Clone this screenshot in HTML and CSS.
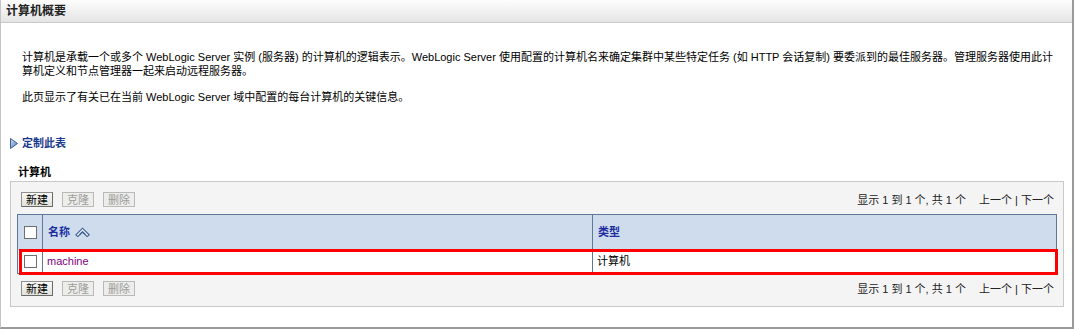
FILE: index.html
```html
<!DOCTYPE html>
<html lang="zh-CN">
<head>
  <meta charset="UTF-8">
  <title>计算机概要</title>
  <link rel="stylesheet" href="styles.css">
</head>
<body>

  <div class="frame">
    <!-- Titelleiste -->
    <div class="frame-title">计算机概要</div>

    <div class="frame-body">
      <p class="intro">计算机是承载一个或多个 WebLogic Server 实例 (服务器) 的计算机的逻辑表示。WebLogic Server 使用配置的计算机名来确定集群中某些特定任务 (如 HTTP 会话复制) 要委派到的最佳服务器。管理服务器使用此计算机定义和节点管理器一起来启动远程服务器。</p>
      <p class="intro">此页显示了有关已在当前 WebLogic Server 域中配置的每台计算机的关键信息。</p>

      <a class="customize" href="#">
        <svg width="8" height="11" viewBox="0 0 8 11">
          <defs>
            <linearGradient id="tri" x1="0" y1="0" x2="1" y2="1">
              <stop offset="0" stop-color="#cfe0f5"/>
              <stop offset="1" stop-color="#4a78b8"/>
            </linearGradient>
          </defs>
          <path d="M0.5 0.5 L7.5 5.5 L0.5 10.5 Z" fill="url(#tri)" stroke="#3d5f94"/>
        </svg>
        定制此表
      </a>

      <div class="table-title">计算机</div>

      <div class="panel">
        <div class="controls">
          <div class="buttons">
            <button class="btn">新建</button>
            <button class="btn" disabled>克隆</button>
            <button class="btn" disabled>删除</button>
          </div>
          <div class="pager">显示 1 到 1 个, 共 1 个 <span class="pager-nav">上一个 | 下一个</span></div>
        </div>

        <div class="grid-wrap">
          <table class="grid">
            <thead>
              <tr>
                <th class="col-check"><span class="box"></span></th>
                <th class="col-name">
                  <a href="#">名称</a>
                  <svg class="sort" width="15" height="10" viewBox="0 0 15 10">
                    <path d="M0.8 7.8 L7.5 1.2 L14.2 7.8 L12.2 9.6 L7.5 5 L2.8 9.6 Z" fill="#dfe8f4" stroke="#405f8c" stroke-width="1.1"/>
                    <path d="M4.6 7.6 L7.5 4.8 L10.4 7.6" fill="none" stroke="#405f8c" stroke-width="1.1"/>
                  </svg>
                </th>
                <th class="col-type"><a href="#">类型</a></th>
              </tr>
            </thead>
            <tbody>
              <tr>
                <td class="col-check"><span class="box"></span></td>
                <td><a class="visited" href="#">machine</a></td>
                <td>计算机</td>
              </tr>
            </tbody>
          </table>
          <!-- Markierung der Zeile -->
          <div class="highlight"></div>
        </div>

        <div class="controls">
          <div class="buttons">
            <button class="btn">新建</button>
            <button class="btn" disabled>克隆</button>
            <button class="btn" disabled>删除</button>
          </div>
          <div class="pager">显示 1 到 1 个, 共 1 个 <span class="pager-nav">上一个 | 下一个</span></div>
        </div>
      </div>
    </div>
  </div>

</body>
</html>
```

FILE: styles.css
```css
/* Reset & Schrift */
* { box-sizing: border-box; margin: 0; padding: 0; }
body {
  background: #fff;
  color: #000;
  font-family: "Liberation Sans", "Noto Sans CJK SC", sans-serif;
  font-size: 11px;
  line-height: 14px;
}
a { text-decoration: none; }

/* Rahmen */
.frame {
  width: 1074px;
  height: 329px;
  border-left: 1px solid #c4c4c4;
  border-right: 2px solid #9a9a9a;
  border-bottom: 2px solid #9a9a9a;
  background: #fff;
}
.frame-title {
  height: 23px;
  padding: 4px 5px 0;
  font-size: 12px;
  font-weight: bold;
  color: #222;
  background: linear-gradient(#fdfdfd, #e4e4e4);
  border-bottom: 1px solid #c9c9c9;
}
.frame-body {
  padding: 27px 8px 0 9px;
}

/* Einleitung */
.intro {
  padding: 0 10px 0 12px;
  margin-bottom: 12px;
}
.customize {
  display: flex;
  align-items: center;
  gap: 4px;
  margin-top: 32px;
  color: #1c3a8c;
  font-weight: bold;
}
.table-title {
  margin-top: 15px;
  padding-left: 8px;
  font-weight: bold;
}

/* Panel */
.panel {
  margin-top: 2px;
  background: #f4f4f4;
  border: 1px solid #c9c9c9;
  padding: 10px 6px 10px 6px;
}
.controls {
  display: flex;
  justify-content: space-between;
  align-items: center;
  padding: 0 3px 0 4px;
}
.controls + .grid-wrap { margin-top: 7px; }
.grid-wrap + .controls { margin-top: 7px; }
.buttons {
  display: flex;
  gap: 9px;
}
.btn {
  width: 32px;
  height: 15px;
  font-family: inherit;
  font-size: 11px;
  line-height: 12px;
  color: #000;
  background: linear-gradient(#f8f8f6, #e2e2dc);
  border: 1px solid #8e8e8e;
  border-right-color: #6a6a6a;
  border-bottom-color: #6a6a6a;
}
.btn:disabled {
  color: #9c9c9c;
  border-color: #b9b9b9;
  background: #ededea;
}
.pager {
  color: #222;
}
.pager-nav {
  margin-left: 10px;
}

/* Tabelle */
.grid-wrap {
  position: relative;
}
.grid {
  width: 100%;
  border-collapse: collapse;
  border: 1px solid #5f7898;
}
.grid th {
  height: 35px;
  text-align: left;
  background: #cfdcee;
  font-weight: bold;
  padding: 0 5px;
  border-left: 1px solid #5f7898;
}
.grid th a { color: #1d2ea0; }
.grid td {
  height: 24px;
  padding: 0 4px;
  background: #fff;
  border-left: 1px solid #5f7898;
}
.grid .col-check {
  width: 25px;
  padding: 0 0 0 6px;
  border-left: none;
}
.grid .col-type { width: 464px; }
.grid th.col-type { padding-left: 5px; }
.box {
  display: block;
  width: 13px;
  height: 13px;
  background: #fff;
  border: 1px solid #6f6f6f;
}
.sort {
  vertical-align: -1px;
  margin-left: 2px;
}
.visited { color: #800080; }
.highlight {
  position: absolute;
  left: 2px;
  top: 35px;
  width: 1039px;
  height: 26px;
  border: 3px solid #f00;
  pointer-events: none;
}
```
